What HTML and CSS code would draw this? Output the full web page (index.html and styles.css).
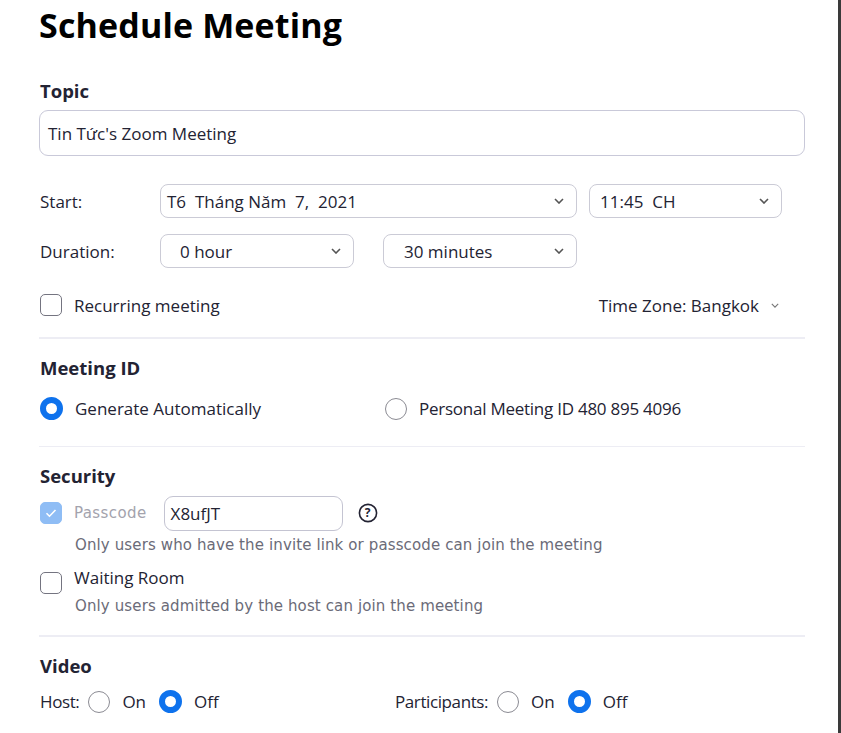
FILE: index.html
```html
<!DOCTYPE html>
<html lang="vi">
<head>
<meta charset="utf-8">
<title>Schedule Meeting</title>
<link rel="stylesheet" href="styles.css">
</head>
<body>
<div class="window">
  <div class="page">
    <h1 class="title">Schedule Meeting</h1>

    <div class="section-label topic-label">Topic</div>
    <div class="text-input topic-input">Tin Tức's Zoom Meeting</div>

    <div class="row start-row">
      <span class="row-label">Start:</span>
      <div class="select date-select"><span>T6&nbsp; Tháng Năm&nbsp; 7,&nbsp; 2021</span><svg class="chev" viewBox="0 0 10 6"><path d="M1 1l4 4 4-4"/></svg></div>
      <div class="select time-select"><span>11:45&nbsp; CH</span><svg class="chev" viewBox="0 0 10 6"><path d="M1 1l4 4 4-4"/></svg></div>
    </div>

    <div class="row duration-row">
      <span class="row-label">Duration:</span>
      <div class="select hour-select"><span>0 hour</span><svg class="chev" viewBox="0 0 10 6"><path d="M1 1l4 4 4-4"/></svg></div>
      <div class="select min-select"><span>30 minutes</span><svg class="chev" viewBox="0 0 10 6"><path d="M1 1l4 4 4-4"/></svg></div>
    </div>

    <div class="row recurring-row">
      <span class="checkbox"></span>
      <span class="check-label">Recurring meeting</span>
      <span class="timezone">Time Zone: Bangkok <svg class="tz-chev" viewBox="0 0 10 6"><path d="M1 1l4 4 4-4"/></svg></span>
    </div>

    <div class="divider div1"></div>

    <div class="section-label">Meeting ID</div>
    <div class="row radio-row">
      <div class="radio-item auto-item"><span class="radio on"></span><span class="radio-label">Generate Automatically</span></div>
      <div class="radio-item"><span class="radio"></span><span class="radio-label pmi-label">Personal Meeting ID 480 895 4096</span></div>
    </div>

    <div class="divider div2"></div>

    <div class="section-label">Security</div>
    <div class="row pass-row">
      <span class="checkbox checked"><svg viewBox="0 0 12 10"><path d="M1.5 5.2l3 3 6-6.2"/></svg></span>
      <span class="pass-label">Passcode</span>
      <div class="text-input pass-input">X8ufJT</div>
      <span class="help"><svg viewBox="0 0 20 20"><circle cx="10" cy="10" r="8.6"/></svg><span class="help-q">?</span></span>
    </div>
    <div class="desc desc1">Only users who have the invite link or passcode can join the meeting</div>
    <div class="row waiting-row">
      <span class="checkbox"></span>
      <span class="check-label">Waiting Room</span>
    </div>
    <div class="desc desc2">Only users admitted by the host can join the meeting</div>

    <div class="divider div3"></div>

    <div class="section-label">Video</div>
    <div class="row video-row">
      <div class="video-group host-group">
        <span class="vlabel">Host:</span>
        <span class="radio"></span><span class="vopt">On</span>
        <span class="radio on"></span><span class="vopt">Off</span>
      </div>
      <div class="video-group">
        <span class="vlabel">Participants:</span>
        <span class="radio"></span><span class="vopt">On</span>
        <span class="radio on"></span><span class="vopt">Off</span>
      </div>
    </div>
  </div>
</div>
</body>
</html>
```

FILE: styles.css
```css
html, body {
  margin: 0;
  padding: 0;
  background: #ffffff;
}

body {
  font-family: "Open Sans", "Noto Sans", sans-serif;
  color: #232333;
}

.window {
  width: 838px;
  height: 733px;
  border-right: 3px solid #3a3a3a;
  overflow: hidden;
}

.page {
  padding-left: 39px;
  width: 766px;
}

.title {
  margin: 0;
  padding-top: 2px;
  font-size: 34px;
  line-height: 46px;
  font-weight: 700;
  letter-spacing: 0.15px;
  color: #000;
}

.section-label {
  font-size: 18.5px;
  font-weight: 700;
  line-height: 24px;
  padding-left: 1px;
  color: #232333;
}

.topic-label {
  margin-top: 31px;
}

.text-input {
  box-sizing: border-box;
  border: 1.5px solid #c9c9d9;
  border-radius: 9px;
  display: flex;
  align-items: center;
  font-size: 17px;
  color: #232333;
}

.topic-input {
  margin-top: 7px;
  width: 766px;
  height: 46px;
  padding-left: 8px;
}

.row {
  display: flex;
  align-items: center;
}

.row-label {
  width: 120px;
  padding-left: 1px;
  font-size: 17px;
}

.start-row {
  margin-top: 28px;
  height: 34px;
}

.duration-row {
  margin-top: 16px;
  height: 34px;
}

.select {
  box-sizing: border-box;
  height: 34px;
  border: 1.5px solid #cbcbd6;
  border-radius: 8px;
  display: flex;
  align-items: center;
  justify-content: space-between;
  font-size: 17px;
  padding-right: 12px;
}

.chev {
  width: 10px;
  height: 6px;
  fill: none;
  stroke: #555;
  stroke-width: 1.6;
}

.date-select {
  width: 417px;
  padding-left: 6px;
}

.time-select {
  width: 193px;
  margin-left: 12px;
  padding-left: 10px;
}

.hour-select {
  width: 194px;
  padding-left: 19px;
}

.min-select {
  width: 194px;
  margin-left: 29px;
  padding-left: 20px;
}

.recurring-row {
  margin-top: 26px;
  height: 22px;
}

.checkbox {
  box-sizing: border-box;
  width: 22px;
  height: 22px;
  border: 1.5px solid #747480;
  border-radius: 5px;
  flex: none;
  margin-left: 1px;
  display: flex;
  align-items: center;
  justify-content: center;
}

.checkbox.checked {
  background: #8fbdf5;
  border-color: #8fbdf5;
}

.checkbox.checked svg {
  width: 12px;
  height: 10px;
  fill: none;
  stroke: #ffffff;
  stroke-width: 1.6;
}

.check-label {
  margin-left: 12px;
  font-size: 17px;
}

.timezone {
  margin-left: auto;
  margin-right: 26px;
  font-size: 17px;
  display: flex;
  align-items: center;
}

.tz-chev {
  width: 8px;
  height: 5px;
  margin-left: 12px;
  fill: none;
  stroke: #777;
  stroke-width: 1.4;
}

.divider {
  height: 1.5px;
  background: #ededf4;
  width: 766px;
}

.div1 {
  margin-top: 21px;
  margin-bottom: 17px;
}

.radio-row {
  margin-top: 16px;
  height: 26px;
}

.radio-item {
  display: flex;
  align-items: center;
}

.auto-item {
  width: 345px;
}

.radio {
  box-sizing: border-box;
  width: 22px;
  height: 22px;
  border-radius: 50%;
  border: 1.5px solid #8b8b93;
  flex: none;
  margin-left: 1px;
}

.radio.on {
  width: 23px;
  height: 23px;
  border: 6px solid #0e72ed;
}

.radio-label {
  margin-left: 12px;
  font-size: 17px;
}

.pmi-label {
  letter-spacing: -0.25px;
}

.div2 {
  margin-top: 24px;
  margin-bottom: 17px;
}

.pass-row {
  margin-top: 8px;
  height: 34px;
}

.pass-label {
  margin-left: 12px;
  font-family: "DejaVu Sans", sans-serif;
  font-size: 15px;
  color: #a3a3ad;
  letter-spacing: 0.4px;
}

.pass-input {
  width: 179px;
  height: 35px;
  margin-left: 17px;
  padding-left: 6px;
  border-width: 1.5px;
  border-color: #c4c4d2;
}

.help {
  position: relative;
  width: 20px;
  height: 20px;
  margin-left: 15px;
  display: flex;
  align-items: center;
  justify-content: center;
}

.help svg {
  position: absolute;
  left: 0;
  top: 0;
  width: 20px;
  height: 20px;
  fill: none;
  stroke: #232333;
  stroke-width: 1.6;
}

.help-q {
  font-size: 12px;
  font-weight: 700;
  line-height: 1;
  color: #232333;
}

.desc {
  font-family: "DejaVu Sans", sans-serif;
  font-size: 15px;
  color: #6b6b78;
  padding-left: 36px;
  line-height: 20px;
  letter-spacing: 0.12px;
}

.desc1 {
  margin-top: 5px;
}

.waiting-row {
  margin-top: 12px;
  height: 28px;
  align-items: flex-start;
}

.waiting-row .checkbox {
  margin-top: 5px;
}

.waiting-row .check-label {
  line-height: 22px;
}

.desc2 {
  margin-top: 1px;
}

.div3 {
  margin-top: 19px;
  margin-bottom: 17px;
}

.video-row {
  margin-top: 12px;
  height: 24px;
}

.video-group {
  display: flex;
  align-items: center;
}

.host-group {
  width: 355px;
}

.vlabel {
  font-size: 17px;
  margin-left: 1px;
  margin-right: 8px;
  letter-spacing: -0.4px;
}

.vopt {
  font-size: 17px;
  margin-left: 12px;
  margin-right: 12px;
}
```
